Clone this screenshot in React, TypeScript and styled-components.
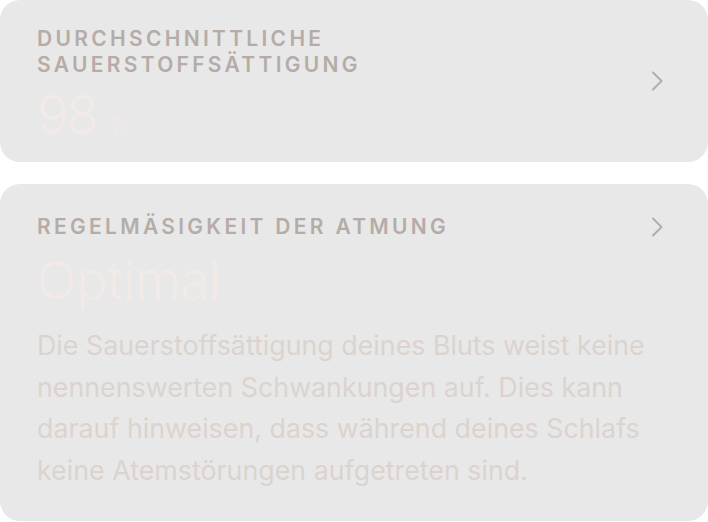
import React from "react";
import styled, { createGlobalStyle } from "styled-components";

const Global = createGlobalStyle`
  html, body { margin: 0; padding: 0; background: #ffffff; }
  body { font-family: Inter, "Noto Sans", sans-serif; -webkit-font-smoothing: antialiased; }
`;

const Page = styled.div`
  display: flex;
  flex-direction: column;
  gap: 22px;
  width: 708px;
`;

const Card = styled.section<{ $row?: boolean }>`
  background: #e8e8e8;
  border-radius: 20px;
  box-sizing: border-box;
  display: flex;
  flex-direction: ${(p) => (p.$row ? "row" : "column")};
  align-items: ${(p) => (p.$row ? "center" : "stretch")};
  justify-content: ${(p) => (p.$row ? "space-between" : "flex-start")};
`;

const SummaryCard = styled(Card)`
  height: 162px;
  padding: 0 44px 0 37px;
`;

const DetailCard = styled(Card)`
  height: 337px;
  padding: 30px 44px 0 37px;
`;

const Heading = styled.h2`
  margin: 0;
  font-size: 21px;
  line-height: 26px;
  font-weight: 600;
  letter-spacing: 3.3px;
  color: #b6aca7;
  text-transform: uppercase;
`;

const HeaderRow = styled.div`
  display: flex;
  align-items: center;
  justify-content: space-between;
`;

const Stack = styled.div`
  display: flex;
  flex-direction: column;
  padding-top: 3px;
`;

const ValueRow = styled.div`
  display: flex;
  align-items: baseline;
  gap: 12px;
  margin-top: 12px;
  color: #f1eae6;
`;

const BigNumber = styled.span`
  font-size: 53px;
  line-height: 50px;
  font-weight: 300;
  letter-spacing: -2.5px;
`;

const Unit = styled.span`
  font-size: 22px;
  font-weight: 400;
`;

const Status = styled.div`
  margin-top: 15px;
  font-size: 52px;
  line-height: 52px;
  font-weight: 300;
  color: #f1eae6;
`;

const Body = styled.p`
  margin: 18px 0 0;
  font-size: 26.8px;
  line-height: 41.5px;
  font-weight: 400;
  color: #dcd3ce;
  max-width: 620px;
`;

const Chevron = () => (
  <svg width="13" height="20" viewBox="0 0 13 20" fill="none" aria-hidden>
    <path d="M2 1.5 L10.5 10 L2 18.5" stroke="#b6aca7" strokeWidth="2" strokeLinecap="round" strokeLinejoin="round" />
  </svg>
);

export default function App() {
  return (
    <>
      <Global />
      <Page>
        <SummaryCard $row>
          <Stack>
            <Heading>
              Durchschnittliche
              <br />
              Sauerstoffsättigung
            </Heading>
            <ValueRow>
              <BigNumber>98</BigNumber>
              <Unit>%</Unit>
            </ValueRow>
          </Stack>
          <Chevron />
        </SummaryCard>
        <DetailCard>
          <HeaderRow>
            <Heading>Regelmäsigkeit der Atmung</Heading>
            <Chevron />
          </HeaderRow>
          <Status>Optimal</Status>
          <Body>
            Die Sauerstoffsättigung deines Bluts weist keine nennenswerten Schwankungen auf. Dies kann darauf
            hinweisen, dass während deines Schlafs keine Atemstörungen aufgetreten sind.
          </Body>
        </DetailCard>
      </Page>
    </>
  );
}
